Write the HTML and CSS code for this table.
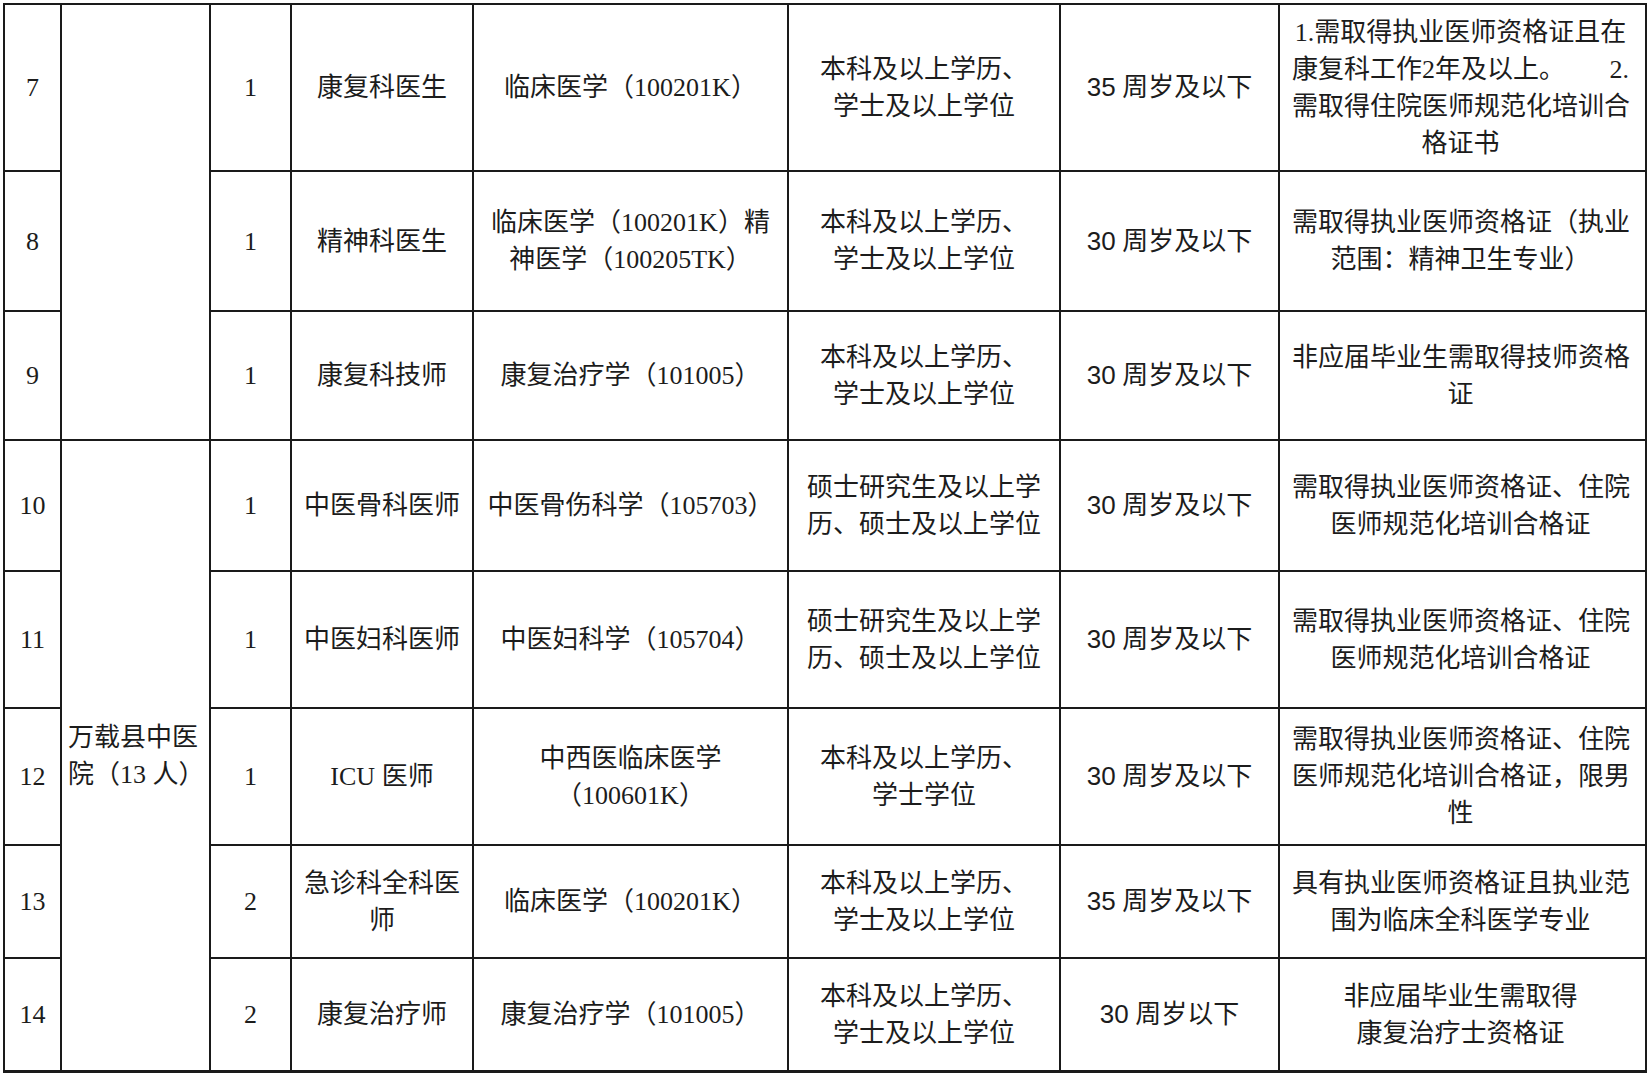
FILE: index.html
```html
<!DOCTYPE html>
<html lang="zh-CN">
<head>
<meta charset="utf-8">
<title>招聘岗位表</title>
<link rel="stylesheet" href="styles.css">
</head>
<body>
<table class="jobs">
  <colgroup>
    <col class="c-no">
    <col class="c-unit">
    <col class="c-num">
    <col class="c-post">
    <col class="c-major">
    <col class="c-edu">
    <col class="c-age">
    <col class="c-req">
  </colgroup>
  <tbody>
    <tr class="r7">
      <td>7</td>
      <td rowspan="3"></td>
      <td>1</td>
      <td>康复科医生</td>
      <td>临床医学（100201K）</td>
      <td>本科及以上学历、<br>学士及以上学位</td>
      <td><span class="sn">35</span> 周岁及以下</td>
      <td class="req">
        <span class="ln">1.需取得执业医师资格证且在</span>
        <span class="ln split"><span>康复科工作2年及以上。</span><span>2.</span></span>
        <span class="ln">需取得住院医师规范化培训合</span>
        <span class="ln">格证书</span>
      </td>
    </tr>
    <tr class="r8">
      <td>8</td>
      <td>1</td>
      <td>精神科医生</td>
      <td>临床医学（100201K）精<br>神医学（100205TK）</td>
      <td>本科及以上学历、<br>学士及以上学位</td>
      <td><span class="sn">30</span> 周岁及以下</td>
      <td class="req">需取得执业医师资格证（执业<br>范围：精神卫生专业）</td>
    </tr>
    <tr class="r9">
      <td>9</td>
      <td>1</td>
      <td>康复科技师</td>
      <td>康复治疗学（101005）</td>
      <td>本科及以上学历、<br>学士及以上学位</td>
      <td><span class="sn">30</span> 周岁及以下</td>
      <td class="req">非应届毕业生需取得技师资格<br>证</td>
    </tr>
    <tr class="r10">
      <td>10</td>
      <td rowspan="5" class="unit">万载县中医<br>院（13 人）</td>
      <td>1</td>
      <td>中医骨科医师</td>
      <td>中医骨伤科学（105703）</td>
      <td>硕士研究生及以上学<br>历、硕士及以上学位</td>
      <td><span class="sn">30</span> 周岁及以下</td>
      <td class="req">需取得执业医师资格证、住院<br>医师规范化培训合格证</td>
    </tr>
    <tr class="r11">
      <td>11</td>
      <td>1</td>
      <td>中医妇科医师</td>
      <td>中医妇科学（105704）</td>
      <td>硕士研究生及以上学<br>历、硕士及以上学位</td>
      <td><span class="sn">30</span> 周岁及以下</td>
      <td class="req">需取得执业医师资格证、住院<br>医师规范化培训合格证</td>
    </tr>
    <tr class="r12">
      <td>12</td>
      <td>1</td>
      <td>ICU 医师</td>
      <td>中西医临床医学<br>（100601K）</td>
      <td>本科及以上学历、<br>学士学位</td>
      <td><span class="sn">30</span> 周岁及以下</td>
      <td class="req">需取得执业医师资格证、住院<br>医师规范化培训合格证，限男<br>性</td>
    </tr>
    <tr class="r13">
      <td>13</td>
      <td>2</td>
      <td>急诊科全科医<br>师</td>
      <td>临床医学（100201K）</td>
      <td>本科及以上学历、<br>学士及以上学位</td>
      <td><span class="sn">35</span> 周岁及以下</td>
      <td class="req">具有执业医师资格证且执业范<br>围为临床全科医学专业</td>
    </tr>
    <tr class="r14">
      <td>14</td>
      <td>2</td>
      <td>康复治疗师</td>
      <td>康复治疗学（101005）</td>
      <td>本科及以上学历、<br>学士及以上学位</td>
      <td><span class="sn">30</span> 周岁以下</td>
      <td class="req">非应届毕业生需取得<br>康复治疗士资格证</td>
    </tr>
  </tbody>
</table>
</body>
</html>
```

FILE: styles.css
```css
html, body {
  margin: 0;
  padding: 0;
  background: #ffffff;
}

body {
  padding: 3px 0 0 3px;
}

.jobs {
  border-collapse: separate;
  border-spacing: 0;
  table-layout: fixed;
  width: 1644px;
  border-top: 2px solid #1a1a1a;
  border-left: 2px solid #1a1a1a;
  font-family: "Liberation Serif", "Noto Sans CJK SC", serif;
  font-size: 26px;
  line-height: 37px;
  color: #1c1c1c;
}

.c-no { width: 57px; }
.c-unit { width: 149px; }
.c-num { width: 81px; }
.c-post { width: 182px; }
.c-major { width: 315px; }
.c-edu { width: 272px; }
.c-age { width: 219px; }
.c-req { width: 367px; }

.jobs td {
  box-sizing: border-box;
  border-right: 2px solid #1a1a1a;
  border-bottom: 2px solid #1a1a1a;
  padding: 0 4px;
  text-align: center;
  vertical-align: middle;
  white-space: nowrap;
}

.r7 { height: 167px; }
.r8 { height: 140px; }
.r9 { height: 129px; }
.r10 { height: 131px; }
.r11 { height: 137px; }
.r12 { height: 137px; }
.r13 { height: 113px; }
.r14 { height: 114px; }

.r14 td { border-bottom-width: 3px; }

.jobs td.unit {
  text-align: left;
  padding: 0 0 0 6px;
  border-bottom-width: 3px;
}

.jobs td.req {
  padding: 0 16px 0 12px;
}

.ln {
  display: block;
}

.ln.split {
  display: flex;
  justify-content: space-between;
}

.sn {
  font-family: "Liberation Sans", "Noto Sans", sans-serif;
}
```
